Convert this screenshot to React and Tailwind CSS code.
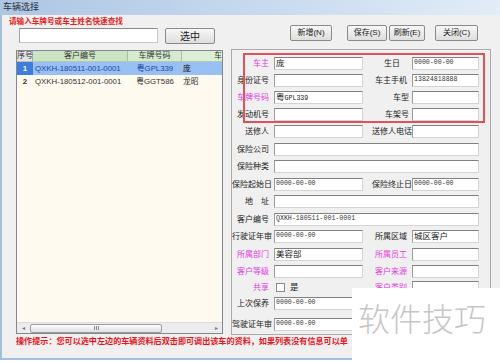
import React from "react";

const sans = "font-['Liberation_Sans','Noto_Sans_CJK_SC',sans-serif]";
const mono = "font-['Liberation_Mono','Noto_Sans_CJK_SC',monospace]";

const rows = [
  { mt: "mt-[7px]", label: "车主", pink: true, value: "庞", rlabel: "生日", rpr: "pr-[12px]", rvalue: "0000-00-00", rmono: true },
  { mt: "mt-[4px]", label: "身份证号", rlabel: "车主手机", rvalue: "13824818888", rmono: true },
  { mt: "mt-[4px]", label: "车牌号码", pink: true, value: "粤", extra: "GPL339", rlabel: "车型", rpr: "pr-[3px]" },
  { mt: "mt-[4px]", label: "发动机号", rlabel: "车架号", rpr: "pr-[3px]" },
  { mt: "mt-[4px]", label: "送修人", rlabel: "送修人电话", rpr: "pr-0" },
  { mt: "mt-[5px]", label: "保险公司", full: true },
  { mt: "mt-[4px]", label: "保险种类", full: true },
  { mt: "mt-[5px]", label: "保险起始日", value: "0000-00-00", mono: true, rlabel: "保险终止日", rpr: "pr-0", rvalue: "0000-00-00", rmono: true },
  { mt: "mt-[4px]", label: "地　址", full: true },
  { mt: "mt-[5px]", label: "客户编号", full: true, value: "QXKH-180511-001-0001", mono: true },
  { mt: "mt-[4px]", label: "行驶证年审", value: "0000-00-00", mono: true, rlabel: "所属区域", rvalue: "城区客户" },
  { mt: "mt-[5px]", label: "所属部门", pink: true, value: "美容部", rlabel: "所属员工", rpink: true },
  { mt: "mt-[4px]", label: "客户等级", pink: true, rlabel: "客户来源", rpink: true },
  { mt: "mt-[3px]", label: "共享", pink: true, check: true, rlabel: "客户类别", rpink: true },
  { mt: "mt-[3px]", label: "上次保养", value: "0000-00-00", mono: true },
  { mt: "mt-[8px]", label: "驾驶证年审", value: "0000-00-00", mono: true },
];

function Field({ w, children, isMono }) {
  return (
    <div
      className={`${w} h-[13px] shrink-0 bg-white border border-[#d4d4d4] border-t-[#808080] border-l-[#9c9c9c] pl-[1px] overflow-hidden whitespace-nowrap ${
        isMono ? `${mono} text-[6.6px] leading-[10px] text-[#333]` : "text-[8.5px] leading-[11px] text-[#222]"
      }`}
    >
      {children}
    </div>
  );
}

function FormRow({ r }) {
  return (
    <div className={`${r.mt} flex items-center h-[13px]`}>
      <div
        className={`w-[42px] pr-[5px] shrink-0 text-right whitespace-nowrap text-[8px] leading-[13px] ${
          r.pink ? "text-[#e03ce0]" : "text-[#222]"
        }`}
      >
        {r.label}
      </div>
      {r.check ? (
        <div className="flex items-center w-[89px] h-[13px]">
          <div className="ml-[2px] w-[9px] h-[9px] bg-white border border-[#8a8a8a]" />
          <span className="ml-[5px] text-[8.5px] leading-[13px] text-[#222]">是</span>
        </div>
      ) : (
        <Field w={r.full ? "w-[205px]" : "w-[89px]"} isMono={r.mono}>
          {r.value}
          {r.extra && <span className={`${mono} text-[6.6px]`}>{r.extra}</span>}
        </Field>
      )}
      {r.rlabel && (
        <>
          <div
            className={`w-[49px] ${r.rpr || "pr-[5px]"} shrink-0 text-right whitespace-nowrap text-[8px] leading-[13px] ${
              r.rpink ? "text-[#e03ce0]" : "text-[#222]"
            }`}
          >
            {r.rlabel}
          </div>
          <Field w="w-[67px]" isMono={r.rmono}>
            {r.rvalue}
          </Field>
        </>
      )}
    </div>
  );
}

function Btn({ className, children }) {
  return (
    <div
      className={`${className} h-[16px] shrink-0 flex items-center justify-center rounded-[2px] border border-[#8a8a8a] bg-linear-to-b from-[#f7f7f7] to-[#dedede] text-[8px] text-[#222] whitespace-nowrap`}
    >
      {children}
    </div>
  );
}

function VehicleTable() {
  return (
    <div className="ml-[14px] mt-[6px] w-[207px] h-[284px] flex flex-col border border-[#828790] bg-[#fffaf0] overflow-hidden">
      <div className="flex h-[11px] shrink-0 border-b border-[#b8c7b4] text-[8px] leading-[10px] text-[#333] whitespace-nowrap">
        <div className="w-[16px] shrink-0 bg-[#e4e4e4] border-r border-[#a8a8a8] text-center">序号</div>
        <div className="w-[95px] shrink-0 bg-[#cbe5c3] border-r border-[#a9bda5] text-center">客户编号</div>
        <div className="w-[54px] shrink-0 bg-[#d4ebce] border-r border-[#a9bda5] text-center">车牌号码</div>
        <div className="w-[80px] shrink-0 bg-[#dcefd6] text-center">车主</div>
      </div>
      <div className="flex h-[13px] shrink-0 bg-[#99c0f2] text-[7.8px] leading-[13px] whitespace-nowrap">
        <div className="w-[16px] shrink-0 bg-[#3d7de0] text-white font-bold text-center">1</div>
        <div className="w-[95px] shrink-0 pl-[2px] text-[#2342a8]">QXKH-180511-001-0001</div>
        <div className="w-[54px] shrink-0 text-center text-[#2342a8]">粤GPL339</div>
        <div className="w-[80px] shrink-0 pl-[1px] text-[#111]">庞</div>
      </div>
      <div className="flex h-[13px] shrink-0 text-[7.8px] leading-[13px] text-[#333] whitespace-nowrap">
        <div className="w-[16px] shrink-0 text-center font-bold">2</div>
        <div className="w-[95px] shrink-0 pl-[2px]">QXKH-180512-001-0001</div>
        <div className="w-[54px] shrink-0 text-center">粤GGT586</div>
        <div className="w-[80px] shrink-0 pl-[1px]">龙昭</div>
      </div>
      <div className="mt-auto h-[11px] shrink-0 flex items-center bg-[#ececec] border-t border-[#dcdcdc] text-[6px] text-[#777]">
        <div className="w-[12px] text-center">◂</div>
        <div className="ml-[1px] w-[132px] h-[9px] rounded-[2px] border border-[#9c9c9c] bg-linear-to-b from-[#fbfbfb] to-[#e0e0e0] flex items-center justify-center gap-[1px]">
          <div className="w-px h-[4px] bg-[#888]" />
          <div className="w-px h-[4px] bg-[#888]" />
          <div className="w-px h-[4px] bg-[#888]" />
        </div>
        <div className="ml-auto w-[12px] text-center">▸</div>
      </div>
    </div>
  );
}

export default function App() {
  return (
    <div className={`relative w-[500px] h-[362px] overflow-hidden bg-white ${sans}`}>
      <div className="h-[15px] bg-linear-to-r from-[#adc6e3] via-[#c6d9ee] to-[#e2ecf7] pl-[3px] text-[9px] leading-[15px] text-[#2a2f38]">
        车辆选择
      </div>
      <div className="h-[345px] flex flex-col bg-[#f0f0f0] border-l-2 border-b-2 border-[#a5bedc]">
        <div className="flex">
          <div className="w-[227px] shrink-0 flex flex-col">
            <div className="mt-[1px] pl-[7px] text-[7.6px] leading-[12px] text-[#e8201c] font-semibold whitespace-nowrap">
              请输入车牌号或车主姓名快速查找
            </div>
            <div className="flex">
              <div className="ml-[17px] w-[139px] h-[15px] bg-white border border-[#c8c8c8] border-t-[#8a8a8a] border-l-[#a0a0a0]" />
              <Btn className="ml-[7px] w-[50px] text-[10px]">选中</Btn>
            </div>
            <VehicleTable />
          </div>
          <div className="flex-1 flex flex-col">
            <div className="mt-[10px] flex">
              <Btn className="ml-[61px] w-[42px]">新增(N)</Btn>
              <Btn className="ml-[15px] w-[40px]">保存(S)</Btn>
              <Btn className="ml-[2px] w-[36px]">刷新(E)</Btn>
              <Btn className="ml-[10px] w-[43px]">关闭(C)</Btn>
            </div>
            <div className="relative mt-[8px] ml-[2px] w-[260px] h-[286px] border border-[#ababab] flex flex-col">
              {rows.map((r, i) => (
                <FormRow key={i} r={r} />
              ))}
              <div className="absolute left-[11px] top-[3px] w-[242px] h-[70px] border-2 border-[#e0505e]" />
            </div>
          </div>
        </div>
        <div className="mt-[1px] pl-[14px] text-[8.1px] leading-[12px] font-bold text-[#e8141c] whitespace-nowrap">
          操作提示：您可以选中左边的车辆资料后双击即可调出该车的资料，如果列表没有信息可以单
        </div>
      </div>
      <div className="absolute left-[352px] top-[288px] w-[148px] h-[74px] bg-white pl-[6px] pt-[13px] text-[32px] leading-[32px] font-light text-[#c6c6c6] font-['Noto_Sans_CJK_SC',sans-serif] whitespace-nowrap">
        软件技巧
      </div>
    </div>
  );
}
